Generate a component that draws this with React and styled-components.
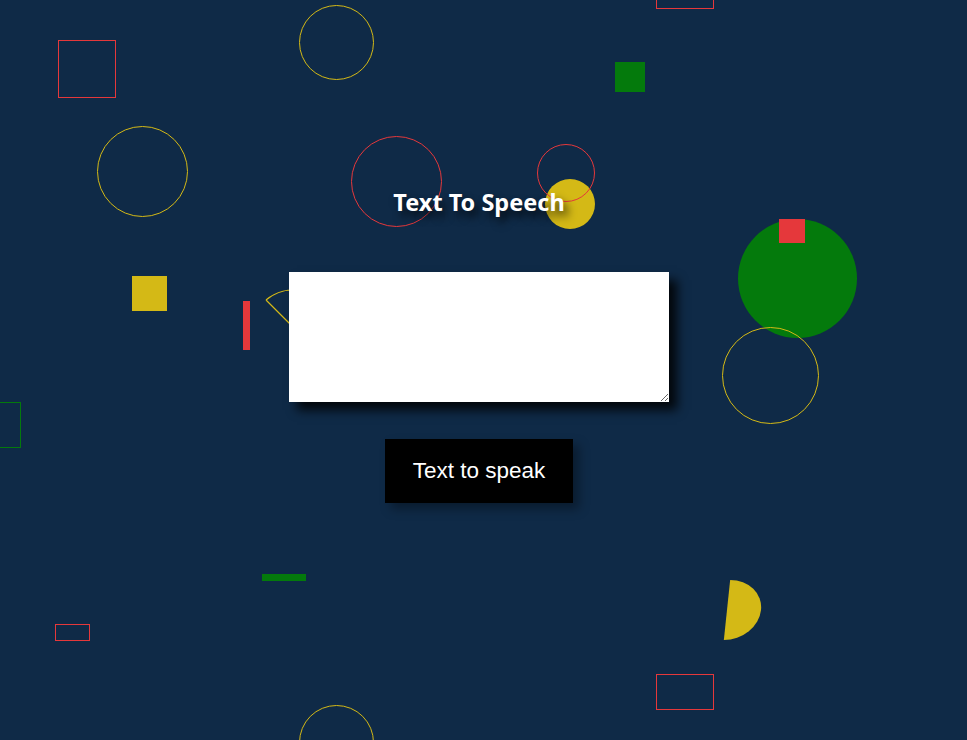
import React from 'react'
import styled, { createGlobalStyle, css } from 'styled-components'

const GlobalStyle = createGlobalStyle`
  html, body {
    margin: 0;
    padding: 0;
    background: #0f2a47;
    overflow: hidden;
  }
`

const RED = '#e5383b'
const GREEN = '#047a0c'
const YELLOW = '#d4b916'

const Page = styled.div`
  position: relative;
  width: 967px;
  height: 740px;
  background: #0f2a47;
  overflow: hidden;
`

// decorative canvas: each shape sits where the data puts it
const Shape = styled.div`
  position: absolute;
  left: ${p => p.$x}px;
  top: ${p => p.$y}px;
  width: ${p => p.$w}px;
  height: ${p => p.$h}px;
  box-sizing: border-box;
  ${p => p.$round && css`border-radius: 50%;`}
  ${p => p.$fill && css`background: ${p.$fill};`}
  ${p => p.$line && css`border: 1.3px solid ${p.$line};`}
`

const HalfDisc = styled.div`
  position: absolute;
  left: 727px;
  top: 580px;
  width: 34px;
  height: 60px;
  background: ${YELLOW};
  border-radius: 0 34px 34px 0 / 0 30px 30px 0;
  transform: skewX(-6deg);
`

const Wedge = styled.svg`
  position: absolute;
  left: 262px;
  top: 285px;
`

const Content = styled.main`
  position: relative;
  z-index: 1;
  display: flex;
  flex-direction: column;
  align-items: center;
  padding: 186px 9px 0 0;
`

const Title = styled.h1`
  margin: 0;
  font-family: 'Noto Sans', 'DejaVu Sans', sans-serif;
  font-weight: 700;
  font-size: 23.5px;
  line-height: 32px;
  color: #ffffff;
  text-shadow: 4px 6px 8px rgba(0, 0, 0, 0.75);
`

const TextBox = styled.textarea`
  margin-top: 54px;
  width: 380px;
  height: 130px;
  box-sizing: border-box;
  border: none;
  outline: none;
  background: #ffffff;
  box-shadow: 8px 8px 10px rgba(0, 0, 0, 0.85);
  font-family: 'Liberation Sans', Arial, sans-serif;
  font-size: 16px;
  padding: 6px;
`

const SpeakButton = styled.button`
  margin-top: 37px;
  width: 188px;
  height: 64px;
  border: none;
  background: #000000;
  color: #ffffff;
  font-family: 'Liberation Sans', Arial, sans-serif;
  font-size: 22.5px;
  box-shadow: 6px 6px 10px rgba(0, 0, 0, 0.35);
  cursor: pointer;
`

const shapes = [
  { x: 58, y: 40, w: 58, h: 58, line: RED },
  { x: 299, y: 5, w: 75, h: 75, line: YELLOW, round: true },
  { x: 656, y: -26, w: 58, h: 35, line: RED },
  { x: 615, y: 62, w: 30, h: 30, fill: GREEN },
  { x: 97, y: 126, w: 91, h: 91, line: YELLOW, round: true },
  { x: 351, y: 136, w: 91, h: 91, line: RED, round: true },
  { x: 545, y: 179, w: 50, h: 50, fill: YELLOW, round: true },
  { x: 537, y: 144, w: 58, h: 58, line: RED, round: true },
  { x: 738, y: 219, w: 119, h: 119, fill: GREEN, round: true },
  { x: 779, y: 219, w: 26, h: 24, fill: RED },
  { x: 722, y: 327, w: 97, h: 97, line: YELLOW, round: true },
  { x: 132, y: 276, w: 35, h: 35, fill: YELLOW },
  { x: 243, y: 301, w: 7, h: 49, fill: RED },
  { x: -20, y: 402, w: 41, h: 46, line: GREEN },
  { x: 262, y: 574, w: 44, h: 7, fill: GREEN },
  { x: 55, y: 624, w: 35, h: 17, line: RED },
  { x: 656, y: 674, w: 58, h: 36, line: RED },
  { x: 299, y: 705, w: 75, h: 75, line: YELLOW, round: true },
]

export default function App() {
  return (
    <Page>
      <GlobalStyle />
      {shapes.map((s, i) => (
        <Shape
          key={i}
          $x={s.x}
          $y={s.y}
          $w={s.w}
          $h={s.h}
          $fill={s.fill}
          $line={s.line}
          $round={s.round}
        />
      ))}
      <Wedge width="60" height="60" viewBox="0 0 60 60">
        <path
          d="M4 15 L44 55 M4 15 A42 42 0 0 1 40 6"
          fill="none"
          stroke={YELLOW}
          strokeWidth="1.2"
        />
      </Wedge>
      <HalfDisc />
      <Content>
        <Title>Text To Speech</Title>
        <TextBox />
        <SpeakButton>Text to speak</SpeakButton>
      </Content>
    </Page>
  )
}
